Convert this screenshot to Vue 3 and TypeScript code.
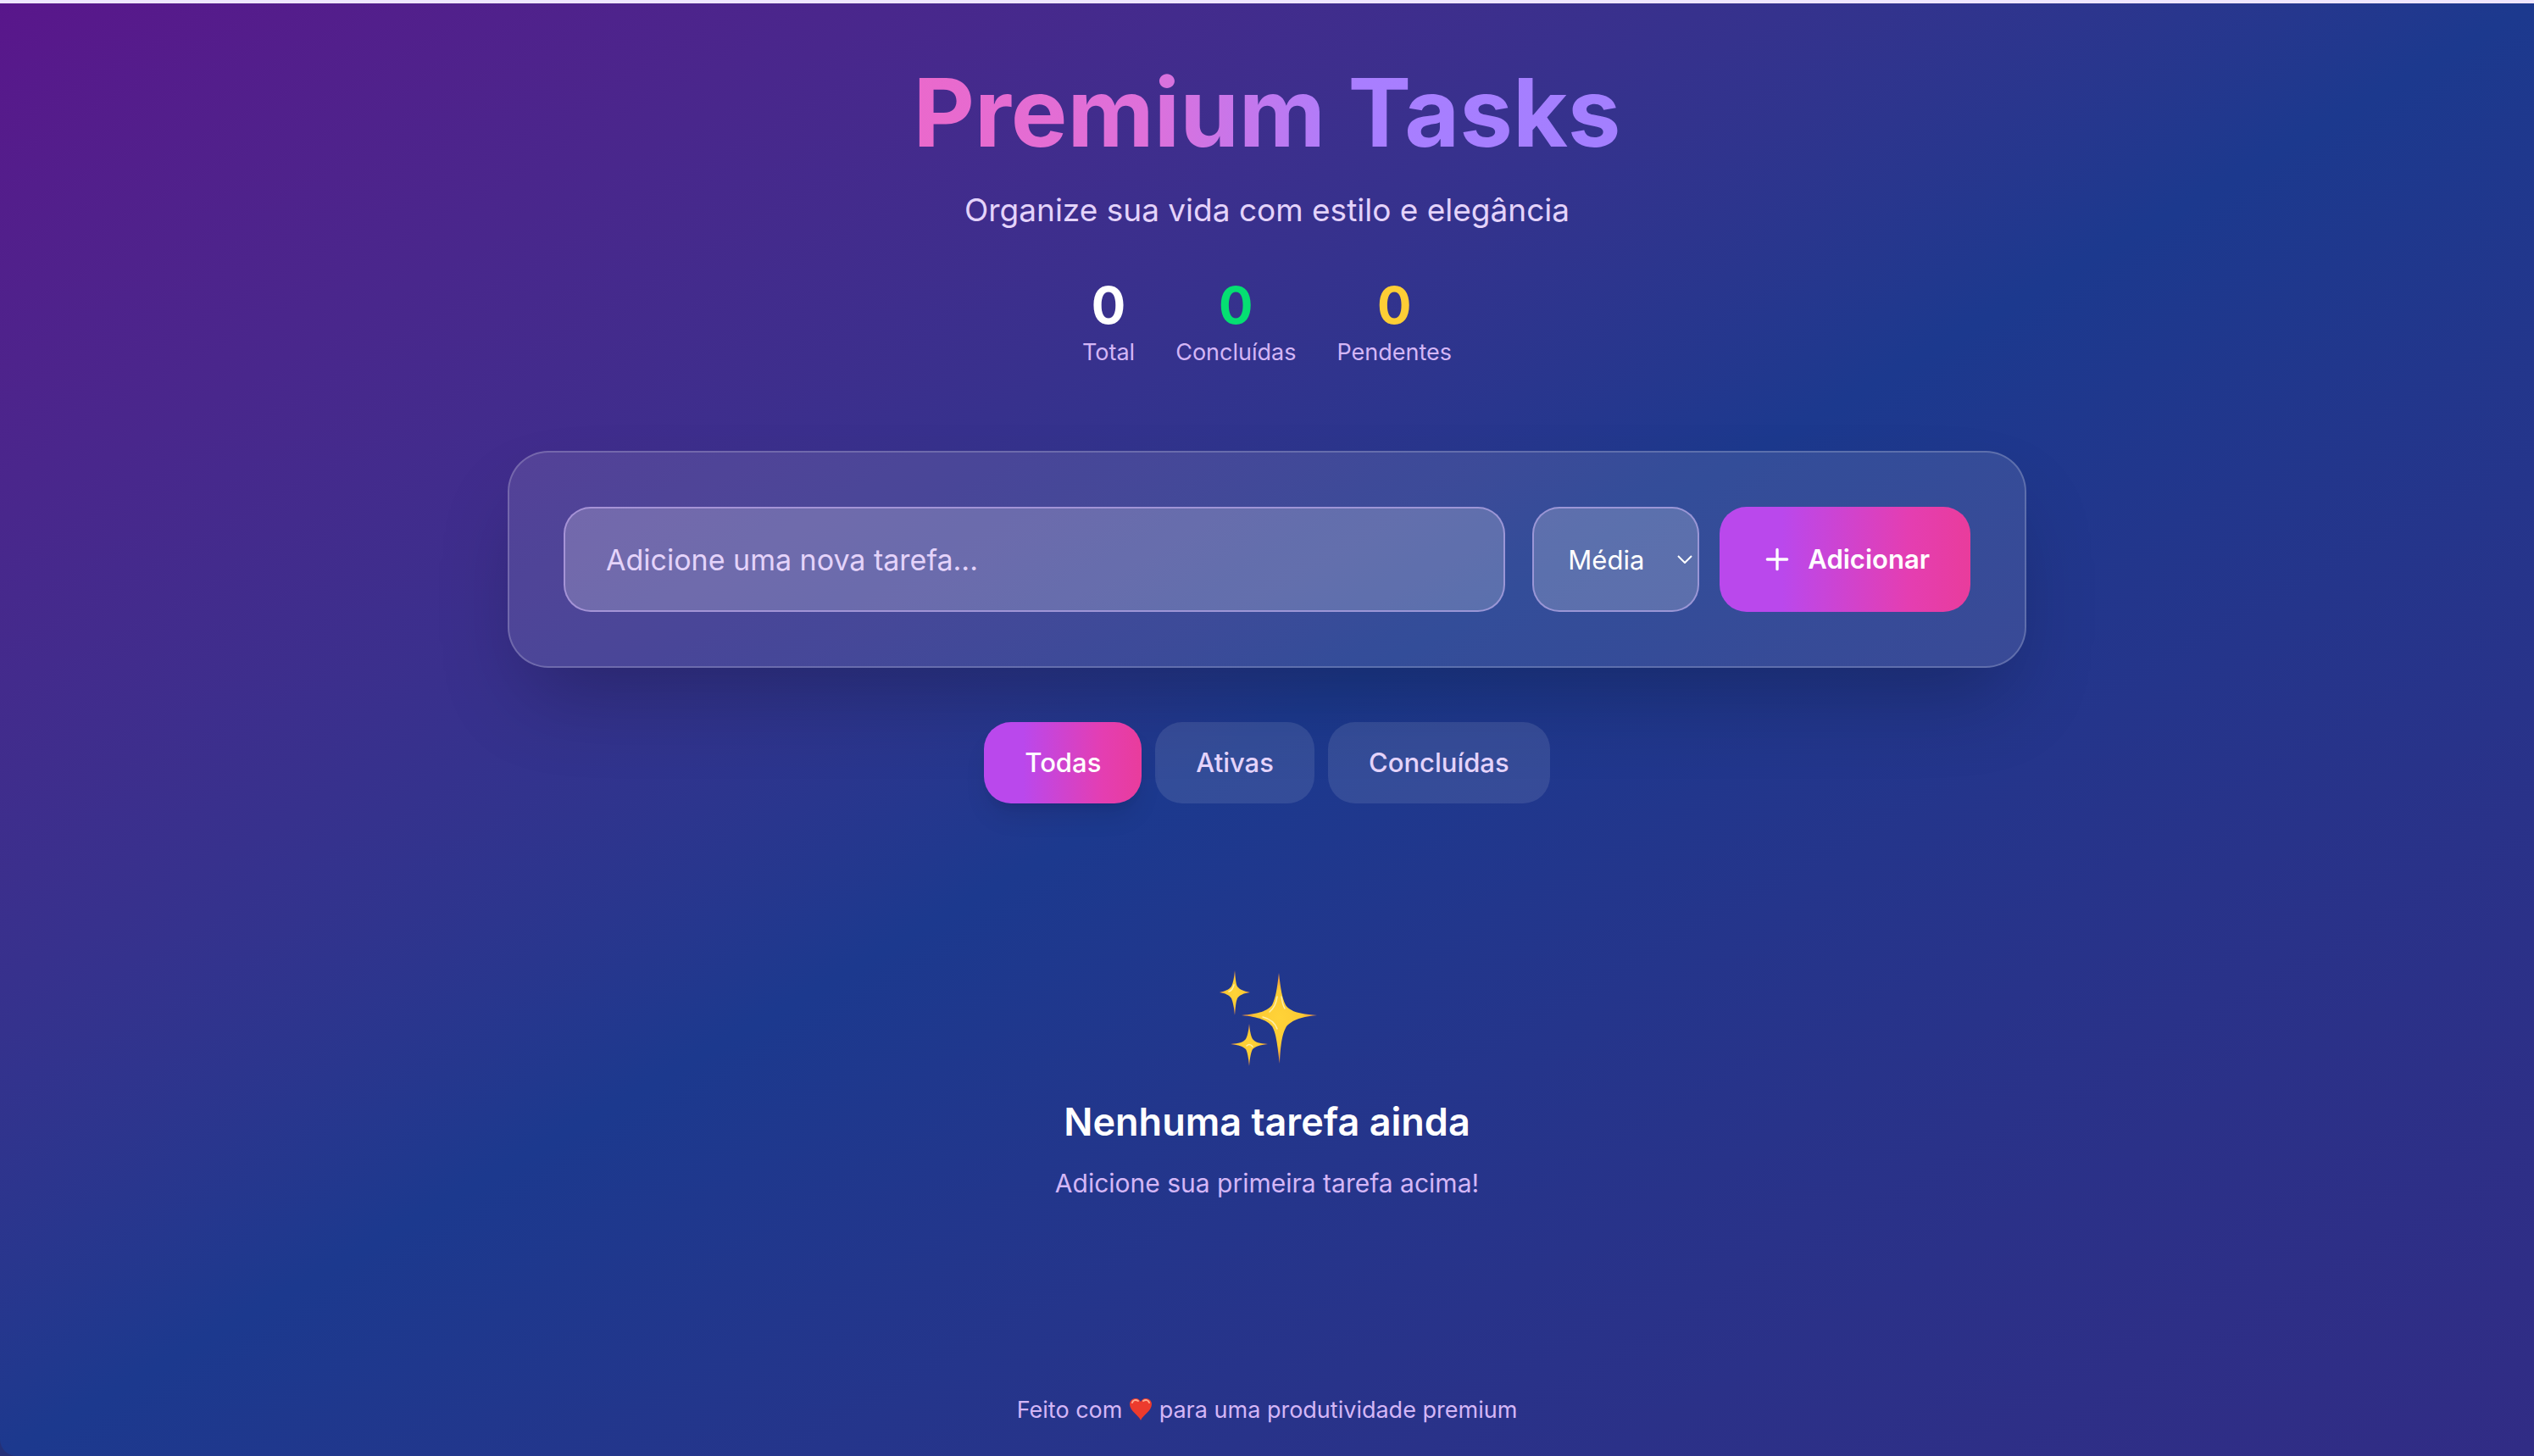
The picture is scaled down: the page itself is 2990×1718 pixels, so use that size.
<script setup lang="ts">
import { computed, ref } from 'vue'

type Priority = 'baixa' | 'media' | 'alta'
type Filter = 'todas' | 'ativas' | 'concluidas'

interface Task {
  id: number
  text: string
  priority: Priority
  done: boolean
}

const tasks = ref<Task[]>([])
const draft = ref('')
const priority = ref<Priority>('media')
const filter = ref<Filter>('todas')

const filters: { id: Filter; label: string }[] = [
  { id: 'todas', label: 'Todas' },
  { id: 'ativas', label: 'Ativas' },
  { id: 'concluidas', label: 'Concluídas' },
]

const doneCount = computed(() => tasks.value.filter((t) => t.done).length)
const stats = computed(() => [
  { label: 'Total', value: tasks.value.length, tone: 'total' },
  { label: 'Concluídas', value: doneCount.value, tone: 'done' },
  { label: 'Pendentes', value: tasks.value.length - doneCount.value, tone: 'pending' },
])
const visible = computed(() =>
  tasks.value.filter((t) => filter.value === 'todas' || t.done === (filter.value === 'concluidas')),
)

function addTask() {
  const text = draft.value.trim()
  if (!text) return
  tasks.value.push({ id: Date.now(), text, priority: priority.value, done: false })
  draft.value = ''
}
</script>

<template>
  <div class="page">
    <main class="container">
      <header class="header">
        <h1 class="title">Premium Tasks</h1>
        <p class="subtitle">Organize sua vida com estilo e elegância</p>
        <div class="stats">
          <div v-for="s in stats" :key="s.label" class="stat">
            <div class="stat-value" :class="s.tone">{{ s.value }}</div>
            <div class="stat-label">{{ s.label }}</div>
          </div>
        </div>
      </header>

      <form class="card" @submit.prevent="addTask">
        <input v-model="draft" class="field" type="text" placeholder="Adicione uma nova tarefa..." aria-label="Nova tarefa" />
        <div class="actions">
          <div class="select-wrap">
            <select v-model="priority" class="select" aria-label="Prioridade">
              <option value="baixa">Baixa</option>
              <option value="media">Média</option>
              <option value="alta">Alta</option>
            </select>
            <svg class="chevron" viewBox="0 0 18 10" aria-hidden="true">
              <path d="M1 1l8 8 8-8" fill="none" stroke="currentColor" stroke-width="2" />
            </svg>
          </div>
          <button class="add" type="submit">
            <svg class="plus" viewBox="0 0 24 24" aria-hidden="true">
              <path d="M5 12h14M12 5v14" fill="none" stroke="currentColor" stroke-width="2" stroke-linecap="round" />
            </svg>
            Adicionar
          </button>
        </div>
      </form>

      <nav class="filters">
        <button
          v-for="f in filters"
          :key="f.id"
          type="button"
          class="filter"
          :class="{ active: filter === f.id }"
          @click="filter = f.id"
        >
          {{ f.label }}
        </button>
      </nav>

      <ul v-if="visible.length" class="list">
        <li v-for="t in visible" :key="t.id">
          <label><input v-model="t.done" type="checkbox" /> {{ t.text }}</label>
        </li>
      </ul>
      <section v-else class="empty">
        <svg class="sparkles" viewBox="0 0 120 120" aria-hidden="true">
          <defs>
            <radialGradient id="gold">
              <stop offset="0" stop-color="#ffd338" />
              <stop offset="0.6" stop-color="#fccb34" />
              <stop offset="1" stop-color="#f08a40" />
            </radialGradient>
          </defs>
          <g fill="url(#gold)">
            <path d="M74 8C76 27 78 38 82 46C88 54 98 56 119 58C99 60 89 64 83 71C78 80 76 91 75 115C72 91 71 80 66 71C60 64 51 60 30 58C51 56 60 53 66 46C70 38 72 27 74 8Z" />
            <path d="M22 5C23 15 23 20 25 24C28 28 32 29 40 31C32 32 28 34 25 38C23 43 23 48 22 58C21 48 20 43 18 38C15 34 11 32 4 31C11 29 15 28 18 24C20 20 21 15 22 5Z" />
            <path d="M39 68C40 78 41 82 43 86C46 90 51 91 61 92C51 93 46 95 43 98C41 102 40 107 39 118C38 107 37 102 35 98C32 95 27 93 17 92C27 91 32 90 35 86C37 82 38 78 39 68Z" />
          </g>
          <g fill="none" stroke="#fff0a8" stroke-linecap="round" stroke-width="1.500">
            <path d="M72 36C71 44 69 49 63 54M77 36C78 43 79 47 81 50M55 60C63 62 69 66 72 74" />
            <path d="M21 22C20 26 18 29 15 30M36 94C38 92 41 92 43 95" />
          </g>
        </svg>
        <h2 class="empty-title">Nenhuma tarefa ainda</h2>
        <p class="empty-text">Adicione sua primeira tarefa acima!</p>
      </section>

      <footer class="footer">
        Feito com
        <svg class="heart" viewBox="0 0 28 28" role="img" aria-label="amor">
          <path d="M14 27C12 21 1 16 1 8C1 4 4 1 8 1C11 1 13 3 14 5C15 3 17 1 20 1C24 1 27 4 27 8C27 16 16 21 14 27Z" fill="#ec3b2d" />
          <path d="M4 6C5 3 8 2 11 4M17 4C20 2 23 3 24 6" fill="none" stroke="#ffab8f" stroke-width="2" stroke-linecap="round" />
        </svg>
        para uma produtividade premium
      </footer>
    </main>
  </div>
</template>

<style>
html {
  background: #243078;
}
body {
  margin: 0;
}
</style>

<style scoped>
.page {
  box-sizing: border-box;
  min-height: 100vh;
  padding: 64px 32px 32px;
  border-top: 4px solid #efe6ff;
  border-bottom-left-radius: 20px;
  background: linear-gradient(to bottom right in oklab, #59168b, #1c398e, #312c85);
  font-family: Inter, 'Liberation Sans', sans-serif;
  color: #fff;
}
.container {
  max-width: 1792px;
  margin: 0 auto;
}
.header {
  margin-bottom: 96px;
  text-align: center;
}
.title {
  margin: 0 0 24px;
  font-size: 112px;
  line-height: 128px;
  font-weight: 700;
  background: linear-gradient(to right, #ea69cc 27%, #de70da 42%, #a97eff 56%, #a37fff 73%);
  background-clip: text;
  -webkit-background-clip: text;
  color: transparent;
}
.subtitle {
  margin: 0;
  font-size: 37px;
  line-height: 56px;
  color: #e4d3fa;
}
.stats {
  display: flex;
  justify-content: center;
  gap: 48px;
  margin-top: 48px;
}
.stat-value {
  font-size: 60px;
  line-height: 72px;
  font-weight: 700;
}
.done {
  color: #05df72;
}
.pending {
  color: #fdce35;
}
.stat-label {
  font-size: 27px;
  line-height: 40px;
  color: #d4b6f6;
}
.card {
  display: flex;
  gap: 32px;
  margin-bottom: 64px;
  padding: 64px;
  border: 2px solid rgba(255, 255, 255, 0.2);
  border-radius: 48px;
  background: rgba(255, 255, 255, 0.1);
  box-shadow: 0 50px 100px -24px rgba(0, 0, 0, 0.25);
}
.field,
.select {
  box-sizing: border-box;
  height: 124px;
  border: 2px solid rgba(218, 190, 255, 0.5);
  border-radius: 32px;
  background: rgba(255, 255, 255, 0.2);
  color: #fff;
  font-family: inherit;
  outline: none;
}
.field {
  flex: 1;
  min-width: 0;
  padding: 0 48px;
  font-size: 34px;
}
.field::placeholder {
  color: #e4d3fa;
  opacity: 1;
}
.actions {
  display: flex;
  gap: 24px;
}
.select-wrap {
  position: relative;
}
.select {
  width: 197px;
  padding: 0 40px;
  appearance: none;
  font-size: 31px;
}
.select option {
  color: #222;
}
.chevron {
  position: absolute;
  top: 57px;
  right: 8px;
  width: 18px;
  height: 10px;
  pointer-events: none;
}
.add {
  display: flex;
  align-items: center;
  gap: 16px;
  padding: 0 48px;
  border: 0;
  border-radius: 32px;
  background: linear-gradient(to right, #ba48ec 25%, #e43eb2 75%, #e93c9c);
  color: #fff;
  font: 600 31px/48px Inter, 'Liberation Sans', sans-serif;
}
.plus {
  width: 40px;
  height: 40px;
}
.filters {
  display: flex;
  justify-content: center;
  gap: 16px;
  margin-bottom: 64px;
}
.filter {
  padding: 24px 48px;
  border: 0;
  border-radius: 32px;
  background: rgba(255, 255, 255, 0.1);
  color: #e4d3fa;
  font: 500 31px/48px Inter, 'Liberation Sans', sans-serif;
}
.filter.active {
  background: linear-gradient(to right, #ba48ec 25%, #e43eb2 75%, #e93c9c);
  color: #fff;
  box-shadow: 0 20px 30px -6px rgba(0, 0, 0, 0.1), 0 8px 12px -8px rgba(0, 0, 0, 0.1);
}
.list {
  margin: 0;
  padding: 0;
  list-style: none;
  font-size: 31px;
  line-height: 64px;
}
.empty {
  padding: 128px 0;
  text-align: center;
}
.sparkles {
  display: block;
  width: 120px;
  height: 120px;
  margin: 0 auto 32px;
}
.empty-title {
  margin: 0 0 16px;
  font-size: 45px;
  line-height: 64px;
  font-weight: 600;
}
.empty-text {
  margin: 0;
  font-size: 30px;
  line-height: 48px;
  color: #d4b6f6;
}
.footer {
  margin-top: 96px;
  text-align: center;
  font-size: 27px;
  line-height: 40px;
  color: #d4b6f6;
}
.heart {
  width: 28px;
  height: 28px;
  vertical-align: -4px;
}
</style>
